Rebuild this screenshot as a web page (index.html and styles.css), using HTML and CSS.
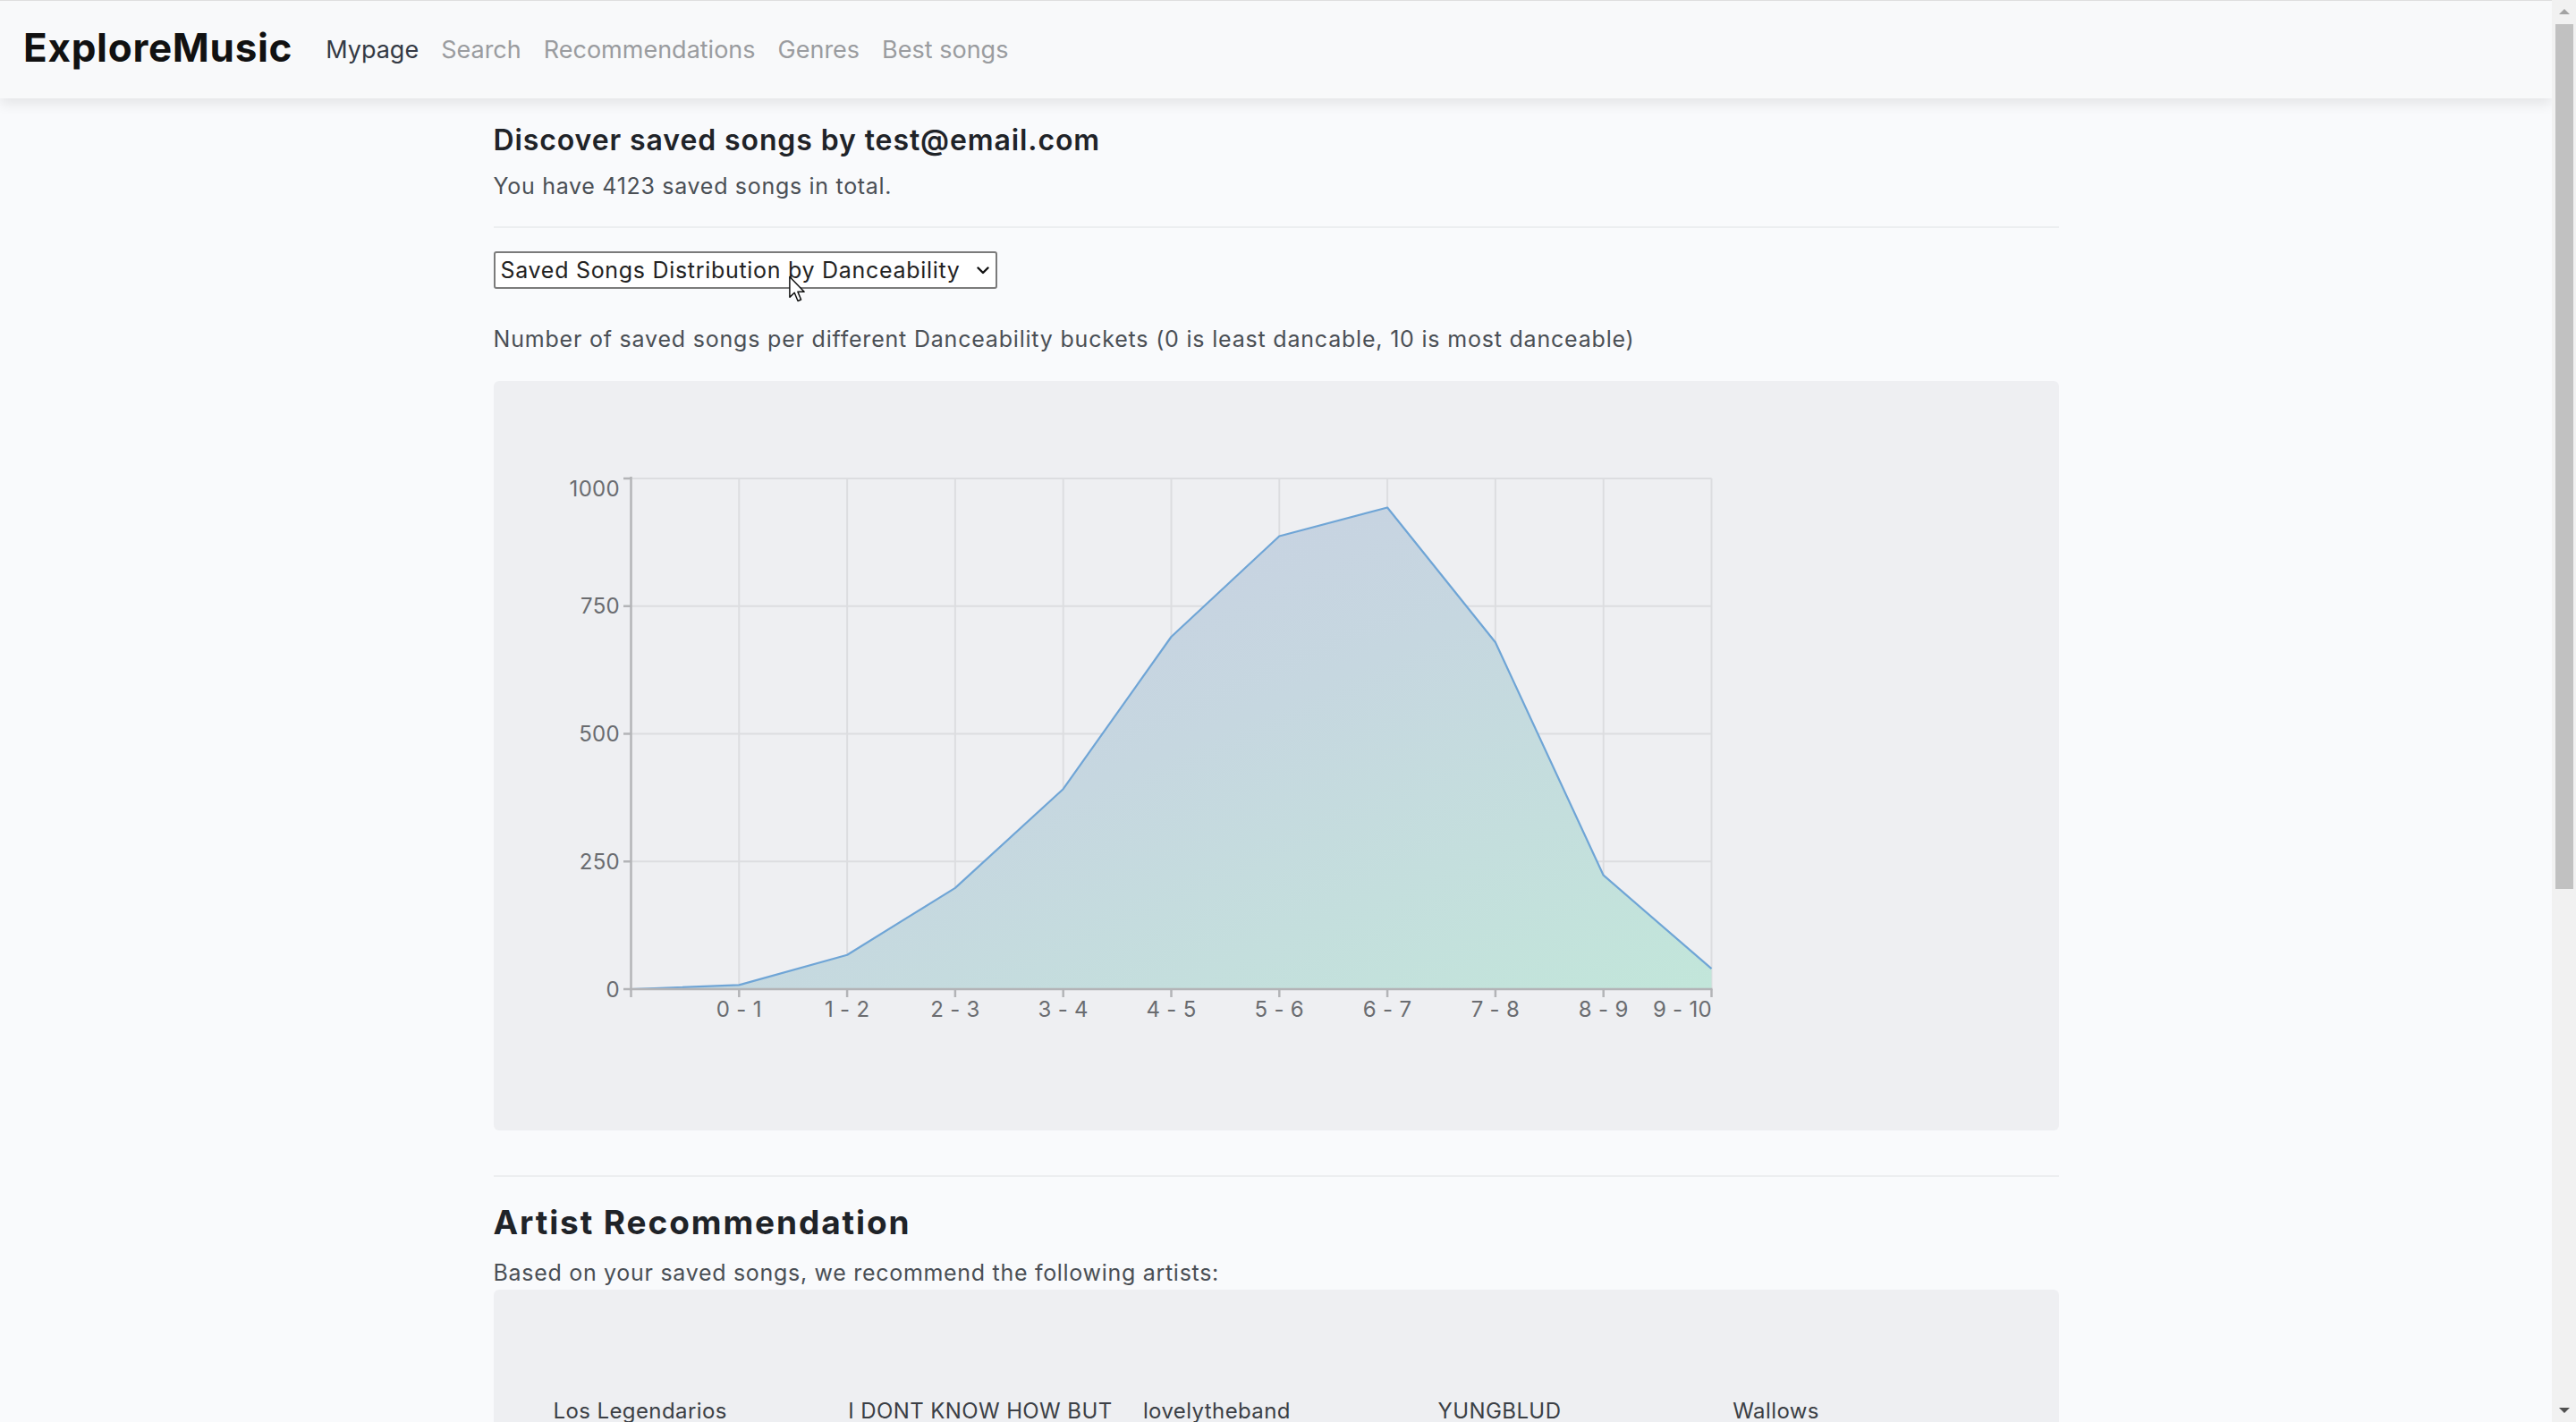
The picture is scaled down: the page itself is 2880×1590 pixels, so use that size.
FILE: index.html
```html
<!DOCTYPE html>
<html lang="en">
<head>
<meta charset="utf-8">
<title>ExploreMusic - Mypage</title>
<link rel="stylesheet" href="styles.css">
</head>
<body>
<nav class="navbar">
  <a class="brand" href="#">ExploreMusic</a>
  <ul class="nav-links">
    <li><a class="nav-link active" href="#">Mypage</a></li>
    <li><a class="nav-link" href="#">Search</a></li>
    <li><a class="nav-link" href="#">Recommendations</a></li>
    <li><a class="nav-link" href="#">Genres</a></li>
    <li><a class="nav-link" href="#">Best songs</a></li>
  </ul>
</nav>

<main class="container">
  <section class="summary">
    <h1 class="title">Discover saved songs by test@email.com</h1>
    <p class="text">You have 4123 saved songs in total.</p>
  </section>

  <hr class="divider">

  <div class="select-wrap">
    <select class="chart-select">
      <option>Saved Songs Distribution by Danceability</option>
      <option>Saved Songs Distribution by Energy</option>
      <option>Saved Songs Distribution by Tempo</option>
    </select>
    <svg class="chevron" viewBox="0 0 14 9" width="14" height="9"><path d="M1.5 1.5 L7 7 L12.5 1.5" fill="none" stroke="#111" stroke-width="2.4" stroke-linecap="round" stroke-linejoin="round"/></svg>
    <svg class="cursor" viewBox="0 0 13 21" width="20" height="31"><path d="M1 1 L1 16.5 L4.6 13.1 L7.2 19.3 L9.6 18.3 L7.1 12.3 L12 12.3 Z" fill="#fff" stroke="#111" stroke-width="1" stroke-linejoin="round"/></svg>
  </div>

  <p class="text desc">Number of saved songs per different Danceability buckets (0 is least dancable, 10 is most danceable)</p>

  <div class="chart-card">
    <svg class="chart" viewBox="0 0 1750 838" width="1750" height="838">
      <defs>
        <linearGradient id="fillGrad" x1="0" y1="0" x2="1" y2="1">
          <stop offset="0" stop-color="#cacde4"/>
          <stop offset="0.5" stop-color="#c6d7e0"/>
          <stop offset="1" stop-color="#c2e6da"/>
        </linearGradient>
      </defs>
      <g class="grid">
        <line x1="153.5" y1="109" x2="1361.5" y2="109"/>
        <line x1="153.5" y1="251.75" x2="1361.5" y2="251.75"/>
        <line x1="153.5" y1="394.5" x2="1361.5" y2="394.5"/>
        <line x1="153.5" y1="537.25" x2="1361.5" y2="537.25"/>
        <line x1="274.3" y1="109" x2="274.3" y2="680"/>
        <line x1="395.1" y1="109" x2="395.1" y2="680"/>
        <line x1="515.9" y1="109" x2="515.9" y2="680"/>
        <line x1="636.7" y1="109" x2="636.7" y2="680"/>
        <line x1="757.5" y1="109" x2="757.5" y2="680"/>
        <line x1="878.3" y1="109" x2="878.3" y2="680"/>
        <line x1="999.1" y1="109" x2="999.1" y2="680"/>
        <line x1="1119.9" y1="109" x2="1119.9" y2="680"/>
        <line x1="1240.7" y1="109" x2="1240.7" y2="680"/>
        <line x1="1361.5" y1="109" x2="1361.5" y2="680"/>
      </g>
      <path class="area" d="M153.5 680 L274.3 675.4 L395.1 641.7 L515.9 566.9 L636.7 456.2 L757.5 286 L878.3 173.5 L999.1 141.5 L1119.9 292.3 L1240.7 552.7 L1361.5 657.2 L1361.5 680 Z" fill="url(#fillGrad)"/>
      <polyline class="line" points="153.5,680 274.3,675.4 395.1,641.7 515.9,566.9 636.7,456.2 757.5,286 878.3,173.5 999.1,141.5 1119.9,292.3 1240.7,552.7 1361.5,657.2"/>
      <g class="axis">
        <line x1="153.5" y1="107" x2="153.5" y2="689"/>
        <line x1="152.5" y1="680" x2="1362.5" y2="680"/>
        <line x1="145" y1="109" x2="153.5" y2="109"/>
        <line x1="145" y1="251.75" x2="153.5" y2="251.75"/>
        <line x1="145" y1="394.5" x2="153.5" y2="394.5"/>
        <line x1="145" y1="537.25" x2="153.5" y2="537.25"/>
        <line x1="145" y1="680" x2="153.5" y2="680"/>
        <line x1="274.3" y1="680" x2="274.3" y2="689"/>
        <line x1="395.1" y1="680" x2="395.1" y2="689"/>
        <line x1="515.9" y1="680" x2="515.9" y2="689"/>
        <line x1="636.7" y1="680" x2="636.7" y2="689"/>
        <line x1="757.5" y1="680" x2="757.5" y2="689"/>
        <line x1="878.3" y1="680" x2="878.3" y2="689"/>
        <line x1="999.1" y1="680" x2="999.1" y2="689"/>
        <line x1="1119.9" y1="680" x2="1119.9" y2="689"/>
        <line x1="1240.7" y1="680" x2="1240.7" y2="689"/>
        <line x1="1361.5" y1="680" x2="1361.5" y2="689"/>
      </g>
      <g class="ylabels">
        <text x="141" y="129">1000</text>
        <text x="141" y="260">750</text>
        <text x="141" y="403">500</text>
        <text x="141" y="546">250</text>
        <text x="141" y="689">0</text>
      </g>
      <g class="xlabels">
        <text x="274.3" y="711">0 - 1</text>
        <text x="395.1" y="711">1 - 2</text>
        <text x="515.9" y="711">2 - 3</text>
        <text x="636.7" y="711">3 - 4</text>
        <text x="757.5" y="711">4 - 5</text>
        <text x="878.3" y="711">5 - 6</text>
        <text x="999.1" y="711">6 - 7</text>
        <text x="1119.9" y="711">7 - 8</text>
        <text x="1240.7" y="711">8 - 9</text>
        <text x="1362" y="711" class="last">9 - 10</text>
      </g>
    </svg>
  </div>

  <hr class="divider divider-lg">

  <h2 class="section-title">Artist Recommendation</h2>
  <p class="text lead">Based on your saved songs, we recommend the following artists:</p>

  <div class="artist-card">
    <ul class="artist-grid">
      <li class="artist"><div class="artist-img"></div><span class="artist-name">Los Legendarios</span></li>
      <li class="artist"><div class="artist-img"></div><span class="artist-name">I DONT KNOW HOW BUT THEY FOUND ME</span></li>
      <li class="artist"><div class="artist-img"></div><span class="artist-name">lovelytheband</span></li>
      <li class="artist"><div class="artist-img"></div><span class="artist-name">YUNGBLUD</span></li>
      <li class="artist"><div class="artist-img"></div><span class="artist-name">Wallows</span></li>
    </ul>
  </div>
</main>

<div class="scrollbar" aria-hidden="true">
  <span class="sb-arrow sb-up"></span>
  <span class="sb-thumb"></span>
  <span class="sb-arrow sb-down"></span>
</div>
</body>
</html>
```

FILE: styles.css
```css
html {
  background: #f9fafc;
}
body {
  margin: 0 27px 0 0;
  background: #f9fafc;
  font-family: Inter, "Noto Sans", "DejaVu Sans", sans-serif;
  color: #212529;
}

/* Fake window scrollbar (overlay on the right edge) */
.scrollbar {
  position: fixed;
  top: 0;
  right: 0;
  width: 27px;
  height: 100vh;
  background: #f1f1f1;
  z-index: 5;
}
.sb-thumb {
  position: absolute;
  left: 4px;
  top: 27px;
  width: 20px;
  height: 967px;
  background: #c1c1c1;
}
.sb-arrow {
  position: absolute;
  left: 8px;
  width: 0;
  height: 0;
  border-left: 6px solid transparent;
  border-right: 6px solid transparent;
}
.sb-up {
  top: 10px;
  border-bottom: 6px solid #a3a3a3;
}
.sb-down {
  bottom: 10px;
  border-top: 6px solid #505050;
}

/* Navbar */
.navbar {
  display: flex;
  align-items: center;
  height: 110px;
  box-sizing: border-box;
  padding: 0 26px;
  background: #f8f9fa;
  border-top: 1px solid #dedede;
  box-shadow: 0 6px 14px rgba(0, 0, 0, 0.09);
  position: relative;
  z-index: 2;
}
.brand {
  font-size: 44px;
  font-weight: 700;
  color: #111;
  text-decoration: none;
  letter-spacing: 0.7px;
  margin-right: 37px;
  margin-top: -6px;
}
.nav-links {
  display: flex;
  gap: 25px;
  list-style: none;
  margin: 0;
  padding: 0;
}
.nav-link {
  font-size: 27px;
  color: #9a9c9f;
  text-decoration: none;
}
.nav-link.active {
  color: #343a44;
}

/* Content */
.container {
  width: 1750px;
  margin: 0 auto;
  padding-bottom: 120px;
}
.summary {
  padding-top: 28px;
}
.title {
  margin: 0;
  font-size: 32px;
  line-height: 37px;
  font-weight: 600;
  letter-spacing: 0.9px;
  color: #1f2328;
}
.text {
  margin: 0;
  font-size: 25px;
  line-height: 36px;
  letter-spacing: 0.7px;
  color: #4a4f55;
}
.summary .text {
  margin-top: 15px;
}
.divider {
  border: 0;
  height: 2px;
  background: #eceef0;
  margin: 27px 0 26px;
}
.divider-lg {
  margin: 50px 0 29px;
}

.select-wrap {
  position: relative;
  width: 563px;
}
.chart-select {
  appearance: none;
  -webkit-appearance: none;
  display: block;
  width: 563px;
  height: 42px;
  box-sizing: border-box;
  padding: 0 36px 0 6px;
  font-family: inherit;
  font-size: 25px;
  letter-spacing: 0.7px;
  color: #222;
  background: #fff;
  border: 2px solid #7b7b7b;
  border-radius: 3px;
}
.chevron {
  position: absolute;
  right: 9px;
  top: 17px;
  pointer-events: none;
}
.cursor {
  position: absolute;
  left: 329px;
  top: 27px;
  pointer-events: none;
}

.desc {
  margin-top: 38px;
  letter-spacing: 0.8px;
}

.chart-card {
  margin-top: 29px;
  height: 838px;
  background: #eeeff2;
  border-radius: 6px;
  overflow: hidden;
}
.chart {
  display: block;
}
.grid line {
  stroke: #dcdde0;
  stroke-width: 2;
}
.axis line {
  stroke: #b3b4b7;
  stroke-width: 2.5;
}
.area {
  stroke: none;
}
.line {
  fill: none;
  stroke: #6fa5d6;
  stroke-width: 2.2;
  stroke-linejoin: round;
}
.ylabels text,
.xlabels text {
  font-family: Inter, "Noto Sans", sans-serif;
  font-size: 24px;
  letter-spacing: 0.3px;
  fill: #6a6c70;
}
.ylabels text {
  text-anchor: end;
}
.xlabels text {
  text-anchor: middle;
}
.xlabels text.last {
  text-anchor: end;
}

.section-title {
  margin: 0;
  font-size: 37px;
  line-height: 43px;
  font-weight: 700;
  letter-spacing: 1.9px;
  color: #1f2328;
}
.lead {
  margin-top: 17px;
}

.artist-card {
  margin-top: 1px;
  background: #eeeff2;
  border-radius: 6px;
  padding: 0 34px 380px 67px;
}
.artist-grid {
  list-style: none;
  margin: 0;
  padding: 0;
  display: grid;
  grid-template-columns: repeat(5, 312px);
  column-gap: 17.7px;
}
.artist {
  display: flex;
  flex-direction: column;
}
.artist-img {
  height: 118px;
}
.artist-name {
  font-size: 24px;
  line-height: 36px;
  letter-spacing: 0.4px;
  color: #3b3f45;
}
```
